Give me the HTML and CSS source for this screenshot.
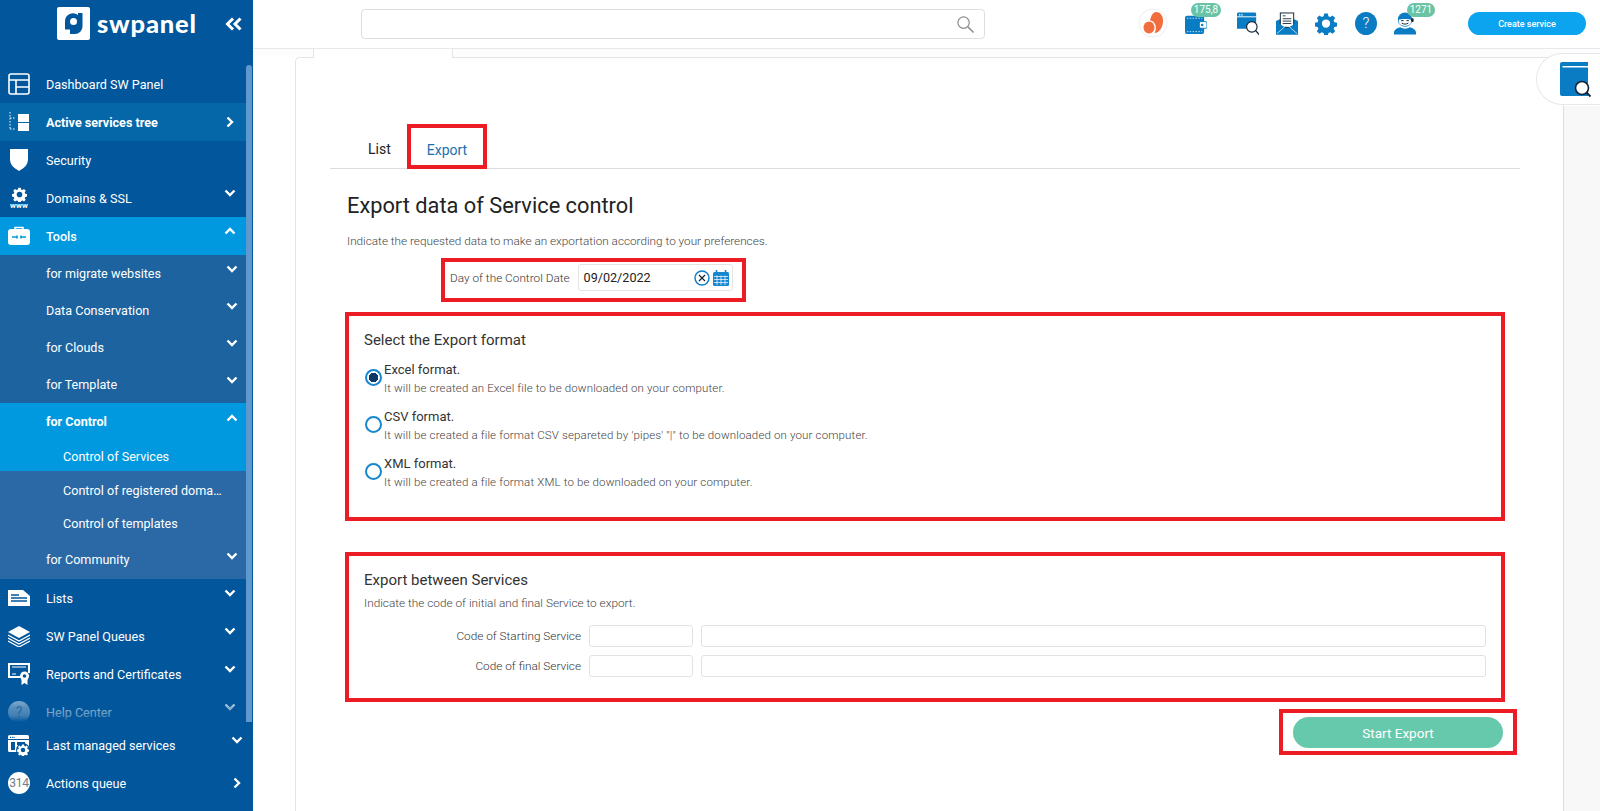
FILE: index.html
```html
<!DOCTYPE html>
<html lang="en">
<head>
<meta charset="utf-8">
<title>Export data of Service control</title>
<link rel="stylesheet" href="styles.css">
</head>
<body>
<svg class="defs" aria-hidden="true">
  <symbol id="down" viewBox="0 0 12 8"><path d="M1.500 1.500 6 6l4.500-4.500" fill="none" stroke="#fff" stroke-width="2.400"/></symbol>
  <symbol id="up" viewBox="0 0 12 8"><path d="M1.500 6.500 6 2l4.500 4.500" fill="none" stroke="#fff" stroke-width="2.400"/></symbol>
  <symbol id="right" viewBox="0 0 8 12"><path d="M1.500 1.500 6 6l-4.500 4.500" fill="none" stroke="#fff" stroke-width="2.400"/></symbol>
  <symbol id="gear" viewBox="0 0 24 24"><path fill-rule="evenodd" d="M10 1h4l.6 3 2 .9 2.600-1.700 2.800 2.800-1.700 2.600.9 2 3 .6v4l-3 .6-.9 2 1.700 2.600-2.800 2.800-2.600-1.700-2 .9-.6 3h-4l-.6-3-2-.9-2.600 1.700-2.800-2.800 1.700-2.600-.9-2-3-.6v-4l3-.6.9-2-1.700-2.600 2.800-2.800 2.600 1.700 2-.9zM12 7.500a4.500 4.500 0 1 0 0 9 4.500 4.500 0 0 0 0-9z"/></symbol>
</svg>

<aside class="sidebar">
  <div class="brand">
    <svg class="brand-mark" viewBox="0 0 33 33"><rect width="33" height="33" rx="2" fill="#fff"/><path d="M21 6h4.500v13.500a7.500 7.500 0 0 1-7.500 7.500h-5v-4.500H8v-8.500a8 8 0 0 1 13-6z" fill="#02569b"/><circle cx="16.500" cy="14.500" r="3.500" fill="#fff"/></svg>
    <span class="brand-name">swpanel</span>
    <svg class="brand-collapse" viewBox="0 0 18 14"><path d="M8 1.500 2.500 7 8 12.500M15.500 1.500 10 7l5.500 5.500" fill="none" stroke="#fff" stroke-width="3"/></svg>
  </div>
  <div class="scrollarea">
    <nav class="nav">
      <a class="item">
        <svg class="ico" viewBox="0 0 22 22"><g fill="none" stroke="#fff" stroke-width="1.600"><rect x="1" y="1" width="20" height="20" rx="2"/><path d="M1 7h20M8 7v14M8 14h13"/></g></svg>
        <span>Dashboard SW Panel</span>
      </a>
      <a class="item item-active">
        <svg class="ico" viewBox="0 0 22 22"><path d="M2 1v18M2 7h6M2 18h6" fill="none" stroke="#fff" stroke-width="1" stroke-dasharray="1.500 1.500"/><rect x="10" y="3" width="11" height="8" fill="#fff"/><rect x="10" y="12" width="11" height="8" fill="#fff"/></svg>
        <span>Active services tree</span>
        <svg class="chev-side"><use href="#right"/></svg>
      </a>
      <a class="item">
        <svg class="ico" viewBox="0 0 22 22"><path d="M2 0h18v10c0 6-4 9-9 12-5-3-9-6-9-12z" fill="#fff"/></svg>
        <span>Security</span>
      </a>
      <a class="item">
        <span class="ico ico-www">
          <svg class="ico-www-gear" fill="#fff"><use href="#gear"/></svg>
          <b>www</b>
        </span>
        <span>Domains &amp; SSL</span>
        <svg class="chev"><use href="#down"/></svg>
      </a>
      <a class="item item-open">
        <svg class="ico" viewBox="0 0 22 22"><path d="M7 5V2.500h8V5" fill="none" stroke="#fff" stroke-width="1.500"/><rect y="4" width="22" height="16" rx="3" fill="#fff"/><path d="M4 12h5M13 12h5M9 10.500v3M13 10.500v3" stroke="#0099e0" stroke-width="1.600"/></svg>
        <span>Tools</span>
        <svg class="chev"><use href="#up"/></svg>
      </a>
      <div class="sub">
        <a class="sub-item"><span>for migrate websites</span><svg class="chev"><use href="#down"/></svg></a>
        <a class="sub-item"><span>Data Conservation</span><svg class="chev"><use href="#down"/></svg></a>
        <a class="sub-item"><span>for Clouds</span><svg class="chev"><use href="#down"/></svg></a>
        <a class="sub-item"><span>for Template</span><svg class="chev"><use href="#down"/></svg></a>
        <div class="open-group">
          <a class="sub-item sub-item-open"><span>for Control</span><svg class="chev"><use href="#up"/></svg></a>
          <a class="leaf leaf-current">Control of Services</a>
        </div>
        <div class="leaves">
          <a class="leaf"><span class="leaf-text">Control of registered domains</span></a>
          <a class="leaf">Control of templates</a>
        </div>
        <a class="sub-item sub-item-last"><span>for Community</span><svg class="chev"><use href="#down"/></svg></a>
      </div>
      <a class="item">
        <svg class="ico" viewBox="0 0 22 22"><path d="M0 3h15l7 6v10H0z" fill="#fff"/><path d="M3 8h8M3 11h16M3 14h16" stroke="#02569b" stroke-width="1.300"/></svg>
        <span>Lists</span>
        <svg class="chev"><use href="#down"/></svg>
      </a>
      <a class="item">
        <svg class="ico" viewBox="0 0 22 22"><path d="M11 1 22 7l-11 6L0 7z" fill="#fff"/><path d="m0 10 11 6 11-6M0 13l11 6 11-6M0 16l11 6 11-6" fill="none" stroke="#fff" stroke-width="1.200"/></svg>
        <span>SW Panel Queues</span>
        <svg class="chev"><use href="#down"/></svg>
      </a>
      <a class="item">
        <svg class="ico" viewBox="0 0 22 22"><path d="M13 14H1V1h20v9" fill="none" stroke="#fff" stroke-width="2"/><path d="M4 4h14M4 11h4" stroke="#fff" stroke-width="1"/><circle cx="16.500" cy="13" r="4.500" fill="#fff"/><circle cx="16.500" cy="13" r="1.800" fill="#02569b"/><path d="M13.500 16v6l3-2 3 2v-6z" fill="#fff"/></svg>
        <span>Reports and Certificates</span>
        <svg class="chev"><use href="#down"/></svg>
      </a>
      <a class="item">
        <span class="ico ico-help">?</span>
        <span>Help Center</span>
        <svg class="chev"><use href="#down"/></svg>
      </a>
    </nav>
    <div class="scrollbar"></div>
  </div>
  <div class="sidebar-foot">
    <a class="item">
      <svg class="ico" viewBox="0 0 22 22"><rect y="1" width="21" height="17" rx="1.500" fill="#fff"/><path d="M0 5.500h21" stroke="#02569b" stroke-width="1"/><path d="M2 3.300h5" stroke="#02569b" stroke-width="1.200" stroke-dasharray="1.200 1"/><rect x="3" y="8" width="4" height="8" fill="#02569b"/><rect x="9" y="8" width="8" height="3" fill="#02569b"/><circle cx="15" cy="16" r="7" fill="#02569b"/><use href="#gear" x="9" y="10" width="12" height="12" fill="#fff"/></svg>
      <span>Last managed services</span>
      <svg class="chev chev-foot"><use href="#down"/></svg>
    </a>
    <a class="item">
      <span class="ico ico-count">314</span>
      <span>Actions queue</span>
      <svg class="chev-side chev-side-foot"><use href="#right"/></svg>
    </a>
  </div>
</aside>

<div class="page">
  <header class="topbar">
    <div class="search">
      <svg class="search-ico" viewBox="0 0 20 20"><circle cx="8" cy="8" r="6" fill="none" stroke="#8d8d8d" stroke-width="1.300"/><path d="m12.500 12.500 6 6" stroke="#8d8d8d" stroke-width="1.500"/></svg>
    </div>
    <div class="tools">
      <svg class="avatar" viewBox="0 0 30 30"><circle cx="15" cy="15" r="14" fill="#fff" stroke="#eee"/><path d="M18 4c5 0 7.500 5 7 10-.5 6-4 11-8.500 11 2-3 2-8-1-11-1-1-2.500-1.500-3.500-1.500C13 8 15 4 18 4z" fill="#f26d3d"/><ellipse cx="11" cy="19.500" rx="5.500" ry="6" fill="#f26d3d"/></svg>
      <span class="tool tool-wallet">
        <svg class="ic" viewBox="0 0 23 22"><rect y="3" width="20" height="19" rx="2" fill="#0a7cc4"/><path d="M2 5.500h16M2 19.500h16" stroke="#fff" stroke-width=".8" stroke-dasharray="1.500 1.500"/><rect x="15" y="9" width="8" height="7" rx="1.500" fill="#fff" stroke="#0a7cc4"/><circle cx="18" cy="12.500" r="1.300" fill="#0a7cc4"/></svg>
        <b class="badge badge-wallet">175,8</b>
      </span>
      <span class="tool tool-window">
        <svg class="ic" viewBox="0 0 23 23"><path d="M0 1.500A1.500 1.500 0 0 1 1.500 0h17A1.500 1.500 0 0 1 20 1.500V17H0z" fill="#0a7cc4"/><path d="M2 2.500h5" stroke="#fff" stroke-width="1.200" stroke-dasharray="1.500 1"/><path d="M0 4.500h20" stroke="#fff"/><circle cx="15.500" cy="15" r="5.500" fill="#fff" stroke="#123" stroke-width="1.200"/><path d="m19.500 19 3.500 4" stroke="#123" stroke-width="1.300"/></svg>
      </span>
      <span class="tool">
        <svg class="ic" viewBox="0 0 23 23"><path d="M0 9 4 7h15l4 2v14H0z" fill="#0a7cc4"/><rect x="4.500" y="0.500" width="14" height="15" fill="#fff" stroke="#123"/><path d="M7 3.500h3M7 6.500h9M7 9h9M7 11.500h9" stroke="#123" stroke-width=".9"/><path d="M0 9.500 11.500 17 23 9.500V23H0z" fill="#0a7cc4"/><path d="m1 22 8-7M22 22l-8-7" stroke="#fff" stroke-width=".7"/></svg>
      </span>
      <span class="tool"><svg class="ic ic-gear"><use href="#gear"/></svg></span>
      <span class="tool tool-help">?</span>
      <span class="tool tool-agent">
        <svg class="ic" viewBox="0 0 23 23"><circle cx="11.500" cy="7.500" r="7.500" fill="#0a7cc4"/><path d="M5 7.500c2-1 11-1 13 0v2c0 3-3 4.500-6.500 4.500S5 12.500 5 9.500z" fill="#fff"/><path d="M7.500 8.500h2.500M13 8.500h2.500M8 11c2 1.500 5 1.500 7 0" stroke="#123" stroke-width="1" fill="none"/><rect x="18" y="6" width="2.500" height="4" rx="1" fill="#123"/><path d="M0 23v-2c0-3 4-5 7-5.500 2 2 7 2 9 0 3 .5 7 2.500 7 5.500v2z" fill="#0a7cc4"/></svg>
        <b class="badge badge-agent">1271</b>
      </span>
      <button class="create">Create service</button>
    </div>
  </header>

  <main class="workspace">
    <div class="tabstrip"><div class="doc-tab"></div></div>
    <div class="columns">
      <section class="panel">
        <div class="tabs">
          <a class="tab">List</a>
          <a class="tab tab-current">Export</a>
        </div>
        <div class="form">
          <h1>Export data of Service control</h1>
          <p class="hint hint-top">Indicate the requested data to make an exportation according to your preferences.</p>
          <div class="date-row">
            <label class="field-label">Day of the Control Date</label>
            <div class="date-input">
              <span class="date-value">09/02/2022</span>
              <svg class="clear" viewBox="0 0 16 16"><circle cx="8" cy="8" r="7" fill="#fff" stroke="#0a7cc4" stroke-width="1.400"/><path d="m5 5 6 6M11 5l-6 6" stroke="#123" stroke-width="1.200"/></svg>
              <svg class="cal" viewBox="0 0 16 16"><rect y="2" width="16" height="14" rx="1.500" fill="#1787cf"/><path d="M3.500 0v3.500M12.500 0v3.500" stroke="#1787cf" stroke-width="1.600"/><path d="M1 6.500h14M1 9.500h14M1 12.500h14M4 5.500V15M8 5.500V15M12 5.500V15" stroke="#fff" stroke-width=".7"/></svg>
            </div>
          </div>

          <fieldset class="box box-format">
            <h2>Select the Export format</h2>
            <div class="option">
              <span class="radio radio-on"></span>
              <div><div class="option-name">Excel format.</div><div class="option-desc">It will be created an Excel file to be downloaded on your computer.</div></div>
            </div>
            <div class="option">
              <span class="radio"></span>
              <div><div class="option-name">CSV format.</div><div class="option-desc">It will be created a file format CSV separeted by 'pipes' "|" to be downloaded on your computer.</div></div>
            </div>
            <div class="option">
              <span class="radio"></span>
              <div><div class="option-name">XML format.</div><div class="option-desc">It will be created a file format XML to be downloaded on your computer.</div></div>
            </div>
          </fieldset>

          <fieldset class="box box-range">
            <h2>Export between Services</h2>
            <p class="hint hint-range">Indicate the code of initial and final Service to export.</p>
            <div class="code-row">
              <label class="field-label code-label">Code of Starting Service</label>
              <div class="code-input"></div>
              <div class="code-input code-input-wide"></div>
            </div>
            <div class="code-row">
              <label class="field-label code-label">Code of final Service</label>
              <div class="code-input"></div>
              <div class="code-input code-input-wide"></div>
            </div>
          </fieldset>

          <div class="actions">
            <div class="action-box"><button class="start">Start Export</button></div>
          </div>
        </div>
      </section>
      <div class="rail"></div>
    </div>
    <div class="float-book">
      <svg class="book" viewBox="0 0 28 34"><path d="M0 2a2 2 0 0 1 2-2h26v4H2.500v1.500H28V34H2a2 2 0 0 1-2-2z" fill="#0a7cc4"/><circle cx="22" cy="26" r="6.500" fill="#fff" stroke="#123" stroke-width="1.600"/><path d="m26.500 30.500 4 4" stroke="#123" stroke-width="1.800"/></svg>
    </div>
  </main>
</div>
</body>
</html>
```
FILE: styles.css
```css
* { box-sizing: border-box; }
html, body { margin: 0; height: 811px; overflow: hidden; }
body { display: flex; font-family: Roboto, "Liberation Sans", sans-serif; background: #fff; color: #222; }
.defs { position: absolute; width: 0; height: 0; }
a { display: flex; color: inherit; }

/* Sidebar */
.sidebar { width: 253px; flex: none; height: 811px; background: #02569b; color: #fff; font-size: 12.600px; display: flex; flex-direction: column; }
.brand { height: 65px; flex: none; display: flex; align-items: flex-start; padding: 7px 0 0 57px; }
.brand-mark { width: 33px; height: 33px; flex: none; }
.brand-name { font-family: Lato, sans-serif; font-weight: 900; font-size: 25.500px; line-height: 29px; margin: 2px 0 0 7px; letter-spacing: .8px; }
.brand-collapse { width: 18px; height: 14px; margin: 10px 0 0 28px; }
.scrollarea { position: relative; height: 657px; overflow: hidden; flex: none; }
.scrollarea::after { content: ""; position: absolute; left: 0; right: 7px; bottom: 0; height: 26px; background: linear-gradient(rgba(2,86,155,0), rgba(2,86,155,.45) 45%, rgba(2,86,155,.6) 75%, #02569b); }
.scrollbar { position: absolute; right: 1px; top: 0; width: 6px; height: 100%; background: #5f98cc; border-radius: 3px 3px 0 0; z-index: 1; }
.nav { width: 246px; }
.item { height: 38px; align-items: center; padding-left: 8px; padding-right: 10px; }
.item > span:not(.ico) { flex: 1; }
.ico { width: 22px; height: 22px; flex: none; margin-right: 16px; }
.item-active { background: #0567a8; font-weight: 700; }
.item-open { background: #0099e0; font-weight: 500; }
.chev { width: 12px; height: 8px; flex: none; margin-bottom: 10px; }
.chev-side { width: 8px; height: 12px; flex: none; margin-right: 2px; }
.ico-www { display: flex; flex-direction: column; align-items: center; }
.ico-www-gear { width: 15px; height: 15px; }
.ico-www b { font-size: 8px; line-height: 7px; letter-spacing: .2px; }
.ico-help { border-radius: 50%; background: #9fbdd9; color: #4f7ea8; text-align: center; font-size: 14px; line-height: 22px; }
.ico-count { border-radius: 50%; background: #fff; color: #6f7c88; text-align: center; font-size: 12px; line-height: 22px; letter-spacing: -.3px; }

.sub { background: #1c639f; }
.sub-item { height: 37px; align-items: center; padding-left: 46px; padding-right: 8px; }
.sub-item > span { flex: 1; }
.sub-item-last { height: 39px; background: #2a69a6; }
.sub-item-last .chev { margin-bottom: 8px; }
.open-group { background: #0099e0; height: 68px; }
.sub-item-open { height: 36px; font-weight: 700; }
.sub-item-open .chev { margin-bottom: 6px; }
.leaf { height: 33px; align-items: center; padding-left: 63px; padding-right: 24px; }
.leaf-current { height: 32px; padding-top: 3px; }
.leaves { background: #2a69a6; padding-top: 3px; }
.leaf-text { white-space: nowrap; overflow: hidden; text-overflow: ellipsis; }

.sidebar-foot { margin-top: 4px; }
.chev-foot { margin-bottom: 11px; }
.chev-side-foot { margin-right: 2px; }
.sidebar-foot .item { padding-right: 10px; }

/* Page */
.page { flex: 1; min-width: 0; display: flex; flex-direction: column; height: 811px; }
.topbar { height: 49px; flex: none; display: flex; align-items: flex-start; border-bottom: 1px solid #e8e8ec; padding: 9px 14px 0 108px; }
.search { width: 624px; height: 30px; border: 1px solid #dedede; border-radius: 4px; display: flex; align-items: center; justify-content: flex-end; padding-right: 9px; flex: none; }
.search-ico { width: 19px; height: 19px; }
.tools { flex: 1; display: flex; align-items: flex-start; margin-left: 153px; }
.avatar { width: 30px; height: 30px; flex: none; margin-top: -1px; }
.tool { width: 22px; height: 23px; flex: none; margin-top: 3px; position: relative; fill: #0a7cc4; }
.ic { width: 22px; height: 23px; display: block; }
.tool-wallet { margin-left: 17px; }
.tool-window { margin-left: 30px; }
.tool-window + .tool { margin-left: 17px; }
.tool-window + .tool + .tool { margin-left: 17px; }
.tool-help { margin-left: 18px; border-radius: 50%; background: #0a7cc4; color: #fff; font-size: 15px; font-weight: 300; line-height: 23px; text-align: center; }
.tool-agent { margin-left: 17px; }
.badge { position: absolute; top: -9px; height: 14px; background: #68c4a5; color: #fff; font-weight: 400; font-size: 10px; line-height: 14px; border-radius: 7px; text-align: center; }
.badge-wallet { left: 6px; width: 30px; }
.badge-agent { left: 13px; width: 28px; }
.create { margin-left: 52px; width: 118px; height: 23px; margin-top: 3px; border: 0; border-radius: 12px; background: #0ca4ee; color: #fff; font: 500 9px Roboto, sans-serif; padding: 0; }

.workspace { flex: 1; position: relative; min-height: 0; padding-left: 42px; background: #fff; }
.tabstrip { height: 8px; background: #fdfdfe; margin-left: -42px; padding-left: 60px; }
.doc-tab { width: 140px; height: 9px; background: #fff; border-left: 1px solid #e4e4e8; border-right: 1px solid #e4e4e8; position: relative; z-index: 1; }
.columns { display: flex; height: 760px; }
.panel { flex: none; width: 1268px; border: 1px solid #e4e4e8; border-bottom: 0; border-right: 0; border-top-left-radius: 5px; padding: 66px 0 0 34px; }
.rail { flex: 1; background: #f8f8f8; border-left: 1px solid #ddd; margin-top: 48px; border-top: 1px solid #fff; }

.tabs { display: flex; width: 1190px; height: 45px; border-bottom: 1px solid #ddd; font-size: 14px; }
.tab { align-items: center; }
.tab:first-child { width: 77px; padding: 5px 0 0 38px; }
.tab-current { width: 80px; height: 45px; border: 4px solid #ec1c24; justify-content: center; color: #1a70b0; padding-top: 6px; }
.form { padding-left: 17px; width: 1190px; }
h1 { margin: 23px 0 0; font-weight: 400; font-size: 21.800px; line-height: 28px; color: #222; }
.hint { margin: 0; font-size: 11.750px; font-weight: 300; color: #444; }
.hint-top { margin-top: 14px; line-height: 14px; }
.date-row { width: 305px; height: 44px; margin: 10px 0 0 94px; border: 4px solid #ec1c24; display: flex; align-items: center; padding: 0 0 5px 5px; }
.field-label { font-size: 11.800px; font-weight: 300; color: #333; }
.date-input { margin-left: 8px; width: 155px; height: 27px; border: 1px solid #e4e4e4; border-radius: 3px; display: flex; align-items: center; padding: 0 3px 0 5px; font-size: 12.600px; font-weight: 400; color: #222; }
.date-value { flex: 1; }
.clear { width: 16px; height: 16px; }
.cal { width: 16px; height: 16px; margin-left: 3px; }

.box { margin: 0 0 0 -2px; padding: 0 0 0 15px; width: 1160px; border: 4px solid #ec1c24; min-inline-size: 0; }
.box-format { height: 209px; margin-top: 10px; }
.box-range { height: 150px; margin-top: 31px; }
h2 { margin: 0; font-weight: 400; font-size: 15px; line-height: 20px; color: #333; }
.box-format h2 { margin-top: 14px; }
.box-range h2 { margin-top: 14px; }
.option { display: flex; margin-top: 10px; height: 37px; }
.box-format h2 + .option { margin-top: 10px; }
.radio { width: 17px; height: 17px; margin: 9px 2px 0 1px; border-radius: 50%; border: 2px solid #1787cf; background: #fff; flex: none; }
.radio-on { background: radial-gradient(circle, #0b3a66 0 4.5px, #fff 5px); }
.option-name { font-size: 13px; line-height: 19px; color: #333; font-weight: 400; }
.option-desc { font-size: 11.500px; font-weight: 300; line-height: 19px; color: #444; letter-spacing: .15px; }
.hint-range { font-size: 11.800px; line-height: 14px; margin: 6px 0 15px; }
.code-row { display: flex; align-items: center; height: 22px; margin-bottom: 8px; }
.code-label { width: 217px; text-align: right; flex: none; }
.code-input { width: 104px; height: 22px; margin-left: 8px; border: 1px solid #e2e2e2; border-radius: 3px; flex: none; }
.code-input-wide { width: 785px; }

.actions { display: flex; justify-content: flex-end; padding-right: 3px; margin-top: 7px; }
.action-box { width: 238px; height: 46px; border: 4px solid #ec1c24; padding: 4px 0 0 10px; }
.start { width: 210px; height: 31px; border: 0; border-radius: 16px; background: #66c9ac; color: #fff; font: 400 13.500px Roboto, sans-serif; padding: 0; }

.float-book { position: absolute; top: 4px; right: 0; width: 64px; height: 52px; background: #fff; border: 1px solid #e8e8ec; border-right: 0; border-radius: 26px 0 0 26px; padding: 8px 0 0 23px; }
.book { width: 28px; height: 34px; display: block; overflow: visible; }
```
